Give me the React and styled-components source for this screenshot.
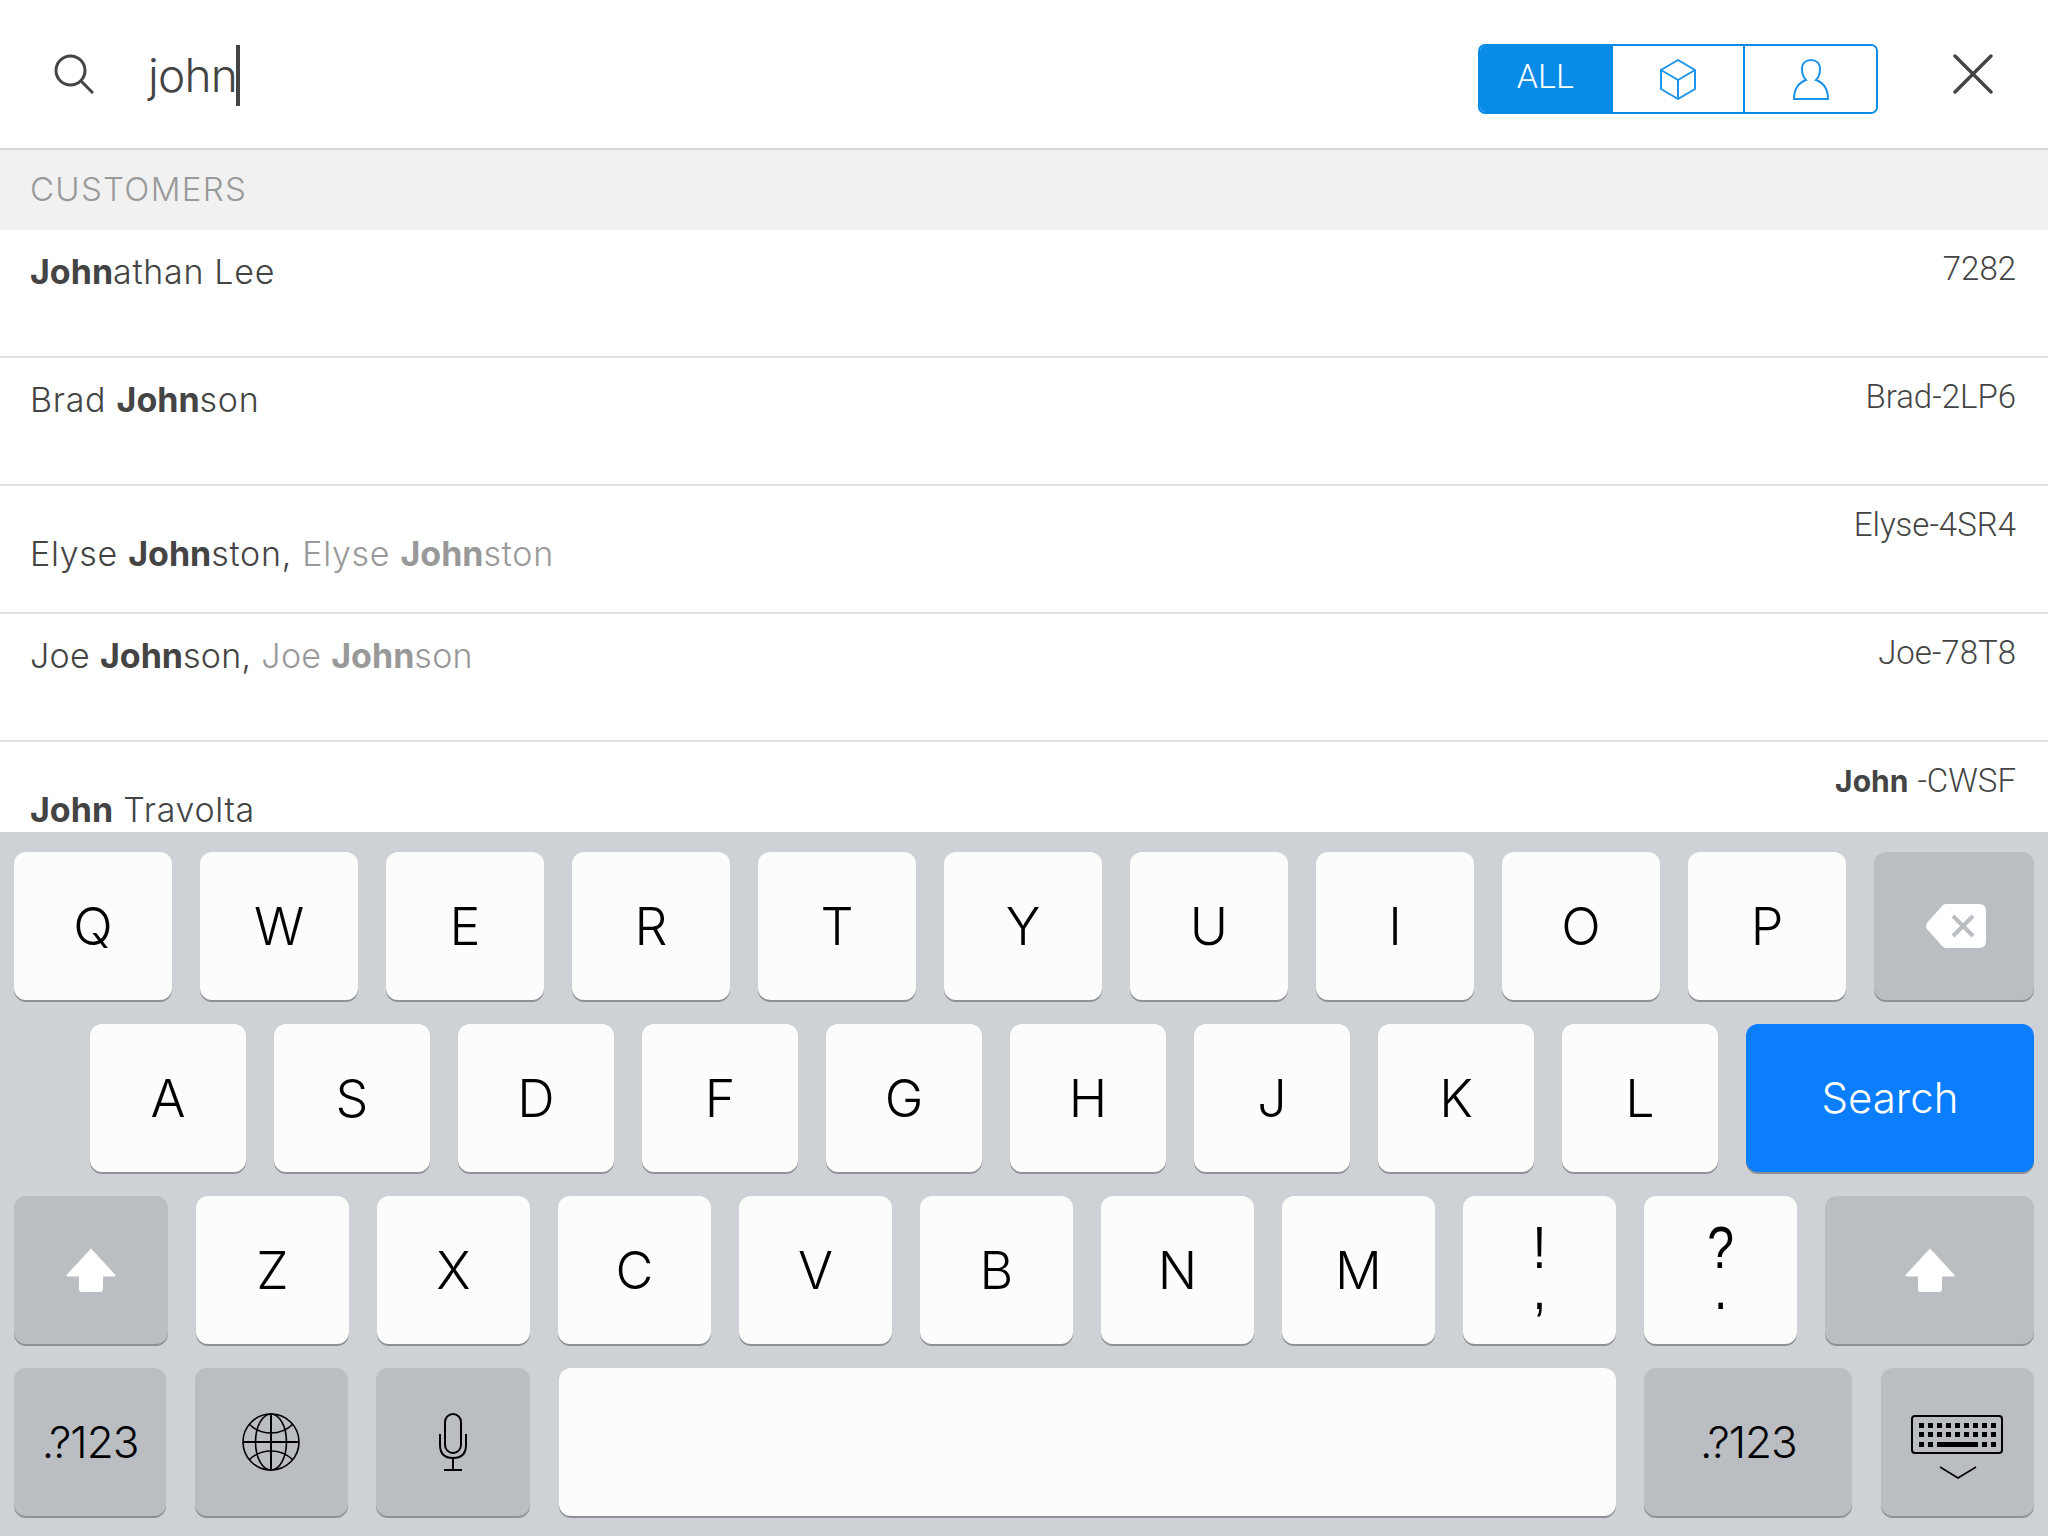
import styled, { createGlobalStyle } from "styled-components";

const GlobalStyle = createGlobalStyle`
  html, body {
    margin: 0;
    padding: 0;
    background: #fff;
  }
`;

const Screen = styled.div`
  display: flex;
  flex-direction: column;
  width: 2048px;
  height: 1536px;
  overflow: hidden;
  font-family: Inter, "Liberation Sans", sans-serif;
  color: #444;
`;

const Header = styled.header`
  display: flex;
  align-items: center;
  flex: none;
  box-sizing: border-box;
  height: 150px;
  padding: 0 55px 0 54px;
  border-bottom: 2px solid #d9d9d9;
`;

const SearchIcon = styled.svg`
  flex: none;
  width: 40px;
  height: 40px;
  margin-right: 54px;
`;

const Query = styled.div`
  display: flex;
  align-items: center;
  flex: 1;
  padding-top: 3px;
  font-size: 46px;
  font-weight: 300;
  letter-spacing: -0.8px;
  line-height: 61px;
`;

const Caret = styled.span`
  display: block;
  width: 4px;
  height: 61px;
  margin-left: -1px;
  background: #444;
`;

const Segments = styled.div`
  display: flex;
  box-sizing: border-box;
  width: 400px;
  height: 70px;
  margin: 10px 75px 0 0;
  border: 2px solid #088ce8;
  border-radius: 7px;
  overflow: hidden;
`;

const Segment = styled.div`
  display: flex;
  align-items: center;
  justify-content: center;
  flex: 1;
  box-sizing: border-box;
  padding-bottom: ${(p) => (p.$active ? "6px" : "0")};
  font-family: Roboto, sans-serif;
  font-size: 34px;
  font-weight: 300;
  color: #fff;
  background: ${(p) => (p.$active ? "#088ce8" : "#fff")};
  & + & {
    border-left: 2px solid #088ce8;
  }
`;

const CloseIcon = styled.svg`
  flex: none;
  width: 40px;
  height: 40px;
`;

const SectionTitle = styled.div`
  flex: none;
  box-sizing: border-box;
  height: 80px;
  padding: 17px 30px 0;
  background: #f1f1f1;
  color: #999;
  font-size: 33px;
  font-weight: 300;
  line-height: 44px;
  letter-spacing: 1.3px;
`;

const List = styled.div`
  flex: 1;
  min-height: 0;
  overflow: hidden;
`;

const Row = styled.div`
  display: flex;
  justify-content: space-between;
  align-items: flex-start;
  box-sizing: border-box;
  height: 128px;
  padding: 0 32px 0 30px;
  border-bottom: 2px solid #e2e2e2;
`;

const Name = styled.div`
  padding-top: ${(p) => (p.$low ? "48px" : "22px")};
  font-size: 34px;
  font-weight: 300;
  line-height: 40px;
  letter-spacing: ${(p) => p.$spacing ?? 0.7}px;
  b {
    font-weight: 700;
    letter-spacing: 0;
  }
`;

const Alias = styled.span`
  color: #999;
`;

const Code = styled.div`
  padding-top: 19px;
  font-family: Roboto, sans-serif;
  font-size: 33px;
  font-weight: 300;
  line-height: 40px;
  b {
    font-family: Inter, sans-serif;
    font-size: 30px;
    font-weight: 700;
    margin-right: 9px;
  }
`;

const Keyboard = styled.div`
  display: flex;
  flex-direction: column;
  gap: 24px;
  flex: none;
  box-sizing: border-box;
  height: 704px;
  padding: 20px 14px 0;
  background: #ced1d5;
`;

const KeyRow = styled.div`
  display: flex;
  gap: ${(p) => p.$gap || 28}px;
  padding-left: ${(p) => p.$indent || 0}px;
`;

const tones = {
  light: "#fcfcfc",
  dark: "#babdc1",
  blue: "#0a7eff",
};

const Key = styled.div`
  display: flex;
  flex-direction: column;
  align-items: center;
  justify-content: center;
  box-sizing: border-box;
  flex: ${(p) => (p.$width ? `0 0 ${p.$width}px` : "1")};
  height: 148px;
  border-radius: 12px;
  background: ${(p) => tones[p.$tone || "light"]};
  box-shadow: 0 2px 0 #8e9094;
  color: ${(p) => (p.$tone === "blue" ? "#fff" : "#000")};
  font-family: Inter, "Liberation Sans", sans-serif;
  font-size: 52px;
  font-weight: 300;
`;

const SmallLabel = styled.span`
  margin-bottom: ${(p) => p.$lift || 0}px;
  font-size: ${(p) => p.$size || 44}px;
  letter-spacing: ${(p) => p.$spacing || 0}px;
`;

const PunctLabel = styled.span`
  display: block;
  margin-bottom: 4px;
  font-family: "Liberation Sans", sans-serif;
  font-size: 60px;
  line-height: 41px;
  text-align: center;
  transform: scaleX(0.8);
`;

const BackspaceIcon = styled.svg`
  margin-left: 3px;
`;

const KeyboardSvg = styled.svg`
  margin: 10px 2px 0 0;
`;

const letterRow1 = ["Q", "W", "E", "R", "T", "Y", "U", "I", "O", "P"];
const letterRow2 = ["A", "S", "D", "F", "G", "H", "J", "K", "L"];
const letterRow3 = ["Z", "X", "C", "V", "B", "N", "M"];

function Shift() {
  return (
    <svg width="50" height="44" viewBox="0 0 50 44">
      <path
        d="M25 0.5 L49.5 27 Q50 28.5 48 28.5 L37 28.5 L37 41 Q37 44 34 44 L16 44 Q13 44 13 41 L13 28.5 L2 28.5 Q0 28.5 0.5 27 Z"
        fill="#fff"
      />
    </svg>
  );
}

function Backspace() {
  return (
    <BackspaceIcon width="60" height="44" viewBox="0 0 60 44">
      <path
        d="M20 0 L53 0 Q60 0 60 7 L60 37 Q60 44 53 44 L20 44 Q18 44 16 42 L1 25 Q-1 22 1 19 L16 2 Q18 0 20 0 Z"
        fill="#fff"
      />
      <path d="M27 12 L47 32 M47 12 L27 32" stroke="#babdc1" strokeWidth="4" />
    </BackspaceIcon>
  );
}

function Globe() {
  return (
    <svg width="58" height="58" viewBox="0 0 58 58" fill="none" stroke="#000" strokeWidth="1.6">
      <circle cx="29" cy="29" r="28" />
      <ellipse cx="29" cy="29" rx="15.5" ry="28" />
      <path d="M29 1 V57" strokeWidth="2" />
      <path d="M1 29 H57" strokeWidth="2" />
      <path d="M7 11 Q16 20 29 20 Q42 20 51 11" />
      <path d="M7 47 Q16 38 29 38 Q42 38 51 47" />
    </svg>
  );
}

function Mic() {
  return (
    <svg width="28" height="58" viewBox="0 0 28 58" fill="none" stroke="#000" strokeWidth="2">
      <rect x="6" y="1" width="16" height="39" rx="8" />
      <path d="M1 21 V32 Q1 45 14 45 Q27 45 27 32 V21" />
      <path d="M14 45 V56" />
      <path d="M5 57 H23" />
    </svg>
  );
}

function KeyboardIcon() {
  const cols = [0, 1, 2, 3, 4, 5, 6, 7, 8];
  return (
    <KeyboardSvg width="92" height="65" viewBox="0 0 92 65" fill="none">
      <rect x="1" y="1" width="90" height="37" rx="3" stroke="#000" strokeWidth="2" />
      {cols.map((c) => (
        <rect key={`a${c}`} x={8 + c * 9} y="8" width="5" height="5" fill="#000" />
      ))}
      {cols.map((c) => (
        <rect key={`b${c}`} x={8 + c * 9} y="17" width="5" height="5" fill="#000" />
      ))}
      {[0, 1, 7, 8].map((c) => (
        <rect key={`c${c}`} x={8 + c * 9} y="27" width="5" height="5" fill="#000" />
      ))}
      <rect x="26" y="27" width="41" height="5" fill="#000" />
      <path d="M29 52 L47 63 L65 52" stroke="#000" strokeWidth="1.6" />
    </KeyboardSvg>
  );
}

export default function App() {
  return (
    <Screen>
      <GlobalStyle />
      <Header>
        <SearchIcon viewBox="0 0 40 40" fill="none" stroke="#444" strokeWidth="3">
          <circle cx="16.5" cy="16.5" r="14.5" />
          <path d="M27 27 L39 39" />
        </SearchIcon>
        <Query>
          john
          <Caret />
        </Query>
        <Segments>
          <Segment $active>ALL</Segment>
          <Segment>
            <svg width="36" height="41" viewBox="0 0 36 41" fill="none" stroke="#1c94ea" strokeWidth="2" strokeLinejoin="round">
              <path d="M18 1 L35 11 V30 L18 40 L1 30 V11 Z" />
              <path d="M1 11 L18 21 L35 11 M18 21 V40" />
            </svg>
          </Segment>
          <Segment>
            <svg width="36" height="41" viewBox="0 0 36 41" fill="none" stroke="#1c94ea" strokeWidth="2">
              <path d="M1 40 H35 C35 30 31 24 23 21 C26 18 27 14 27 10 C27 4 23 1 18 1 C13 1 9 4 9 10 C9 14 10 18 13 21 C5 24 1 30 1 40 Z" />
            </svg>
          </Segment>
        </Segments>
        <CloseIcon viewBox="0 0 40 40" fill="none" stroke="#444" strokeWidth="3.4" strokeLinecap="round">
          <path d="M2 2 L38 38 M38 2 L2 38" />
        </CloseIcon>
      </Header>

      <SectionTitle>CUSTOMERS</SectionTitle>

      <List>
        <Row>
          <Name><b>John</b>athan Lee</Name>
          <Code>7282</Code>
        </Row>
        <Row>
          <Name>Brad <b>John</b>son</Name>
          <Code>Brad-2LP6</Code>
        </Row>
        <Row>
          <Name $low>
            Elyse <b>John</b>ston, <Alias>Elyse <b>John</b>ston</Alias>
          </Name>
          <Code>Elyse-4SR4</Code>
        </Row>
        <Row>
          <Name $spacing={0.3}>
            Joe <b>John</b>son, <Alias>Joe <b>John</b>son</Alias>
          </Name>
          <Code>Joe-78T8</Code>
        </Row>
        <Row>
          <Name $low><b>John</b> Travolta</Name>
          <Code><b>John</b>-CWSF</Code>
        </Row>
      </List>

      <Keyboard>
        <KeyRow>
          {letterRow1.map((k) => (
            <Key key={k} $width={158}>{k}</Key>
          ))}
          <Key $width={160} $tone="dark"><Backspace /></Key>
        </KeyRow>
        <KeyRow $indent={76}>
          {letterRow2.map((k) => (
            <Key key={k} $width={156}>{k}</Key>
          ))}
          <Key $width={288} $tone="blue"><SmallLabel $size={42} $lift={2}>Search</SmallLabel></Key>
        </KeyRow>
        <KeyRow>
          <Key $width={154} $tone="dark"><Shift /></Key>
          {letterRow3.map((k) => (
            <Key key={k} $width={153}>{k}</Key>
          ))}
          <Key $width={153}>
            <PunctLabel>!<br />,</PunctLabel>
          </Key>
          <Key $width={153}>
            <PunctLabel>?<br />.</PunctLabel>
          </Key>
          <Key $width={209} $tone="dark"><Shift /></Key>
        </KeyRow>
        <KeyRow $gap={28.6}>
          <Key $width={152} $tone="dark"><SmallLabel $spacing={-1}>.?123</SmallLabel></Key>
          <Key $width={153} $tone="dark"><Globe /></Key>
          <Key $width={154} $tone="dark"><Mic /></Key>
          <Key />
          <Key $width={208} $tone="dark"><SmallLabel $spacing={-1}>.?123</SmallLabel></Key>
          <Key $width={153} $tone="dark"><KeyboardIcon /></Key>
        </KeyRow>
      </Keyboard>
    </Screen>
  );
}
